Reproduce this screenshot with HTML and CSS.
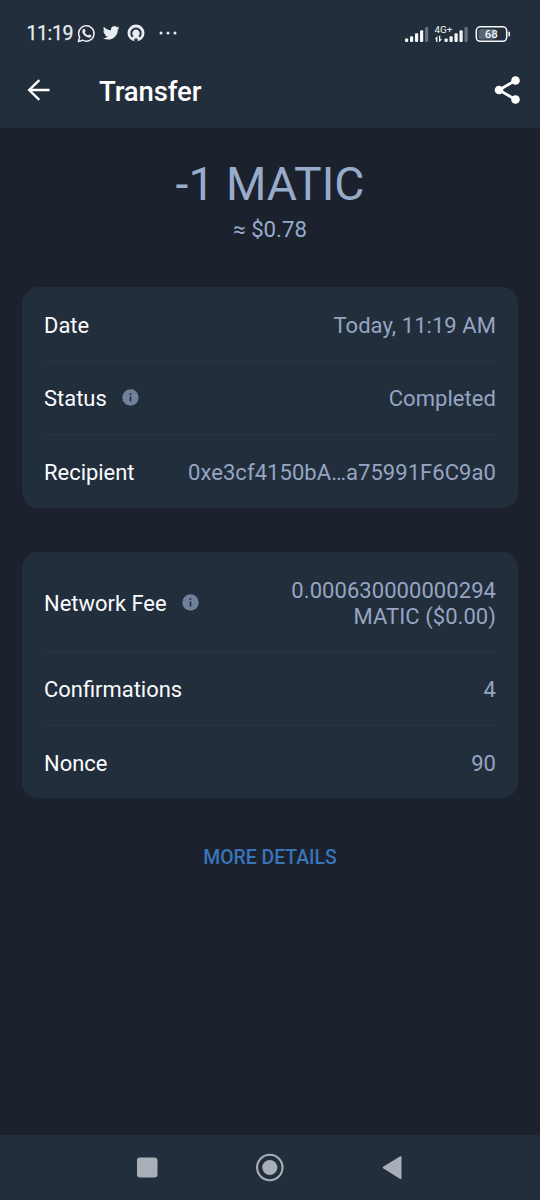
FILE: index.html
```html
<!DOCTYPE html>
<html lang="en">
<head>
<meta charset="utf-8">
<title>Transfer</title>
<link rel="stylesheet" href="styles.css">
</head>
<body>
<div class="screen">
  <header class="top">
    <div class="status">
      <span class="clock">11:19</span>
      <svg class="notices" width="104" height="20" viewBox="76 23 104 20">
        <path d="M78.400 41.500l1.200-4.300a7.700 7.700 0 1 1 3 3z" fill="none" stroke="#e9edf1" stroke-width="1.500" stroke-linejoin="round"/>
        <path d="M83.100 29.300c.6-.7 1.500-.6 1.800.1l.6 1.400c.2.6-.7 1.200-.7 1.600.8 1.500 1.900 2.400 3.200 2.900.5.100 1-1.100 1.500-.9l1.600.8c.7.4.1 1.700-.5 2.100-1.300.9-3.200.3-4.700-.7-1.500-1-3.100-2.900-3.500-4.400-.2-1.200.1-2.200.7-2.900z" fill="#e9edf1"/>
        <g transform="translate(102.800 24.500) scale(.695)"><path fill="#e9edf1" d="M23.953 4.570a10 10 0 01-2.825.775 4.958 4.958 0 002.163-2.723c-.951.555-2.005.959-3.127 1.184a4.920 4.920 0 00-8.384 4.482C7.690 8.095 4.067 6.130 1.640 3.162a4.822 4.822 0 00-.666 2.475c0 1.710.870 3.213 2.188 4.096a4.904 4.904 0 01-2.228-.616v.060a4.923 4.923 0 003.946 4.827 4.996 4.996 0 01-2.212.085 4.936 4.936 0 004.604 3.417 9.867 9.867 0 01-6.102 2.105c-.390 0-.779-.023-1.170-.067a13.995 13.995 0 007.557 2.209c9.053 0 13.998-7.496 13.998-13.985 0-.210 0-.420-.015-.630A9.935 9.935 0 0024 4.590z"/></g>
        <circle cx="136" cy="33" r="8.500" fill="#e9edf1"/>
        <path d="M132.800 36.700a4.700 4.700 0 1 1 6.400 0" fill="none" stroke="#232e3c" stroke-width="1.900"/>
        <circle cx="136" cy="33.300" r="1.700" fill="#e9edf1"/>
        <path d="M134 41.800l.6-3.200h2.800l.6 3.200z" fill="#232e3c"/>
        <g fill="#e9edf1"><circle cx="161" cy="33" r="1.500"/><circle cx="168" cy="33" r="1.500"/><circle cx="175" cy="33" r="1.500"/></g>
      </svg>
      <svg class="radio" width="108" height="22" viewBox="404 22 108 22">
        <g fill="#f4f6f8">
          <rect x="405" y="37.500" width="3.200" height="3.500" rx="1"/><rect x="410" y="35.300" width="3.200" height="5.700" rx="1"/><rect x="415" y="32.300" width="3.200" height="8.700" rx="1"/><rect x="420" y="29.300" width="3.200" height="11.700" rx="1"/>
          <rect x="444.500" y="37.500" width="3.200" height="3.500" rx="1"/><rect x="449.500" y="35.300" width="3.200" height="5.700" rx="1"/><rect x="454.500" y="32.300" width="3.200" height="8.700" rx="1"/><rect x="459.500" y="29.300" width="3.200" height="11.700" rx="1"/>
          <path d="M434.800 38.200l2.600-3.400v6.200h-1.300v-2.800zM439 34.800h1.300v3.400h1.800l-3.100 3z"/>
          <rect x="508.400" y="30.500" width="1.600" height="5" rx=".8"/>
        </g>
        <g fill="#66717e"><rect x="425" y="26" width="3.200" height="15" rx="1"/><rect x="464.500" y="26" width="3.200" height="15" rx="1"/></g>
        <text class="net" x="434.500" y="32">4G+</text>
        <rect x="478.500" y="28" width="17" height="10.500" rx="2" fill="#596572"/>
        <rect x="476.300" y="25.800" width="30.400" height="14.500" rx="4" fill="none" stroke="#f4f6f8" stroke-width="1.600"/>
        <text class="level" x="491.300" y="37.200">68</text>
      </svg>
    </div>
    <div class="bar">
      <svg width="24" height="24" viewBox="0 0 24 24" fill="none" stroke="#fff" stroke-width="2.400"><path d="M23.500 12H3.200M13.300 2.200L3.200 12l10.100 9.800"/></svg>
      <h1 class="title">Transfer</h1>
      <svg class="share" width="28" height="30" viewBox="0 0 28 30"><path d="M21.500 5.400L5 15l16.500 9.600" fill="none" stroke="#fff" stroke-width="2.800"/><g fill="#fff"><circle cx="21.500" cy="5.500" r="4.300"/><circle cx="5" cy="15" r="4.300"/><circle cx="21.500" cy="24.500" r="4.300"/></g></svg>
    </div>
  </header>

  <main class="content">
    <div class="amount">-1 MATIC</div>
    <div class="fiat">≈ $0.78</div>

    <section class="card">
      <div class="row first"><span class="label">Date</span><span class="value">Today, 11:19 AM</span></div>
      <div class="row"><span class="label">Status</span><svg class="info" width="17" height="17" viewBox="0 0 17 17"><circle cx="8.500" cy="8.500" r="8.200" fill="#71809b"/><path d="M7.700 4.200h1.600v1.700H7.700zM7.700 7.500h1.600v5H7.700z" fill="#232e3c"/></svg><span class="value">Completed</span></div>
      <div class="row last"><span class="label">Recipient</span><span class="value">0xe3cf4150bA…a75991F6C9a0</span></div>
    </section>

    <section class="card">
      <div class="row tall"><span class="label">Network Fee</span><svg class="info" width="17" height="17" viewBox="0 0 17 17"><circle cx="8.500" cy="8.500" r="8.200" fill="#71809b"/><path d="M7.700 4.200h1.600v1.700H7.700zM7.700 7.500h1.600v5H7.700z" fill="#232e3c"/></svg><span class="value">0.000630000000294<br>MATIC ($0.00)</span></div>
      <div class="row middle"><span class="label">Confirmations</span><span class="value">4</span></div>
      <div class="row last"><span class="label">Nonce</span><span class="value">90</span></div>
    </section>

    <a class="more">MORE DETAILS</a>
  </main>

  <nav class="nav">
    <svg width="540" height="65" viewBox="0 0 540 65">
      <g fill="#a9afb7"><rect x="137" y="22.500" width="20.500" height="20" rx="3"/><circle cx="269.800" cy="32.500" r="7.600"/><path d="M383.500 32.500L400.700 22v21.200z" stroke="#a9afb7" stroke-width="1.600" stroke-linejoin="round"/></g>
      <circle cx="269.800" cy="32.500" r="12.700" fill="none" stroke="#a9afb7" stroke-width="2.100"/>
    </svg>
  </nav>
</div>
</body>
</html>
```
FILE: styles.css
```css
* { box-sizing: border-box; }
body { margin: 0; background: #1b222d; font-family: Roboto, sans-serif; }
.screen { width: 540px; height: 1200px; display: flex; flex-direction: column; }

.top { height: 128px; background: #232e3c; }
.status { height: 60px; padding: 7px 28px 0 26.5px; display: flex; align-items: center; }
.clock { width: 49.5px; font-size: 19.5px; letter-spacing: -0.4px; color: #e9edf1; -webkit-text-stroke: 0.25px #e9edf1; white-space: nowrap; }
.notices { margin-top: -1px; }
.radio { margin-left: auto; }
.net { font-size: 9.8px; fill: #f4f6f8; }
.level { font-size: 11.5px; font-weight: 500; fill: #f4f6f8; text-anchor: middle; }
.bar { height: 60px; padding: 0 18px 0 26px; display: flex; align-items: center; }
.title { margin: 4px 0 0 49px; font-size: 27.5px; font-weight: 500; line-height: 34px; letter-spacing: -0.1px; color: #fff; }
.share { margin-left: auto; }

.content { flex: 1; padding: 28px 22px 0; display: flex; flex-direction: column; align-items: center; }
.amount { font-size: 46.3px; line-height: 56px; color: #98abcb; }
.fiat { margin-bottom: 42px; padding-top: 2px; font-size: 22.2px; line-height: 31px; color: #98abcb; }
.card { width: 496px; margin-bottom: 44px; padding: 0 22px; border-radius: 16px; background: #232e3c; }
.row { height: 73.5px; padding-top: 2px; display: flex; align-items: center; font-size: 22px; line-height: 26px; }
.row + .row { border-top: 1px solid #293441; }
.first, .last { padding-top: 4px; }
.tall { height: 99px; padding-top: 5px; }
.middle { height: 74px; padding-top: 4px; }
.middle + .last { height: 73px; padding-top: 5px; }
.label { color: #fafcff; font-size: 21.95px; }
.info { margin: -3px 0 0 15px; }
.value { margin-left: auto; text-align: right; letter-spacing: 0.06px; color: #95a5c2; }
.more { margin-top: 2px; font-size: 19.4px; font-weight: 500; line-height: 28px; color: #3874b8; }

.nav { height: 65px; background: #232e3c; }
.nav svg { display: block; }
```
